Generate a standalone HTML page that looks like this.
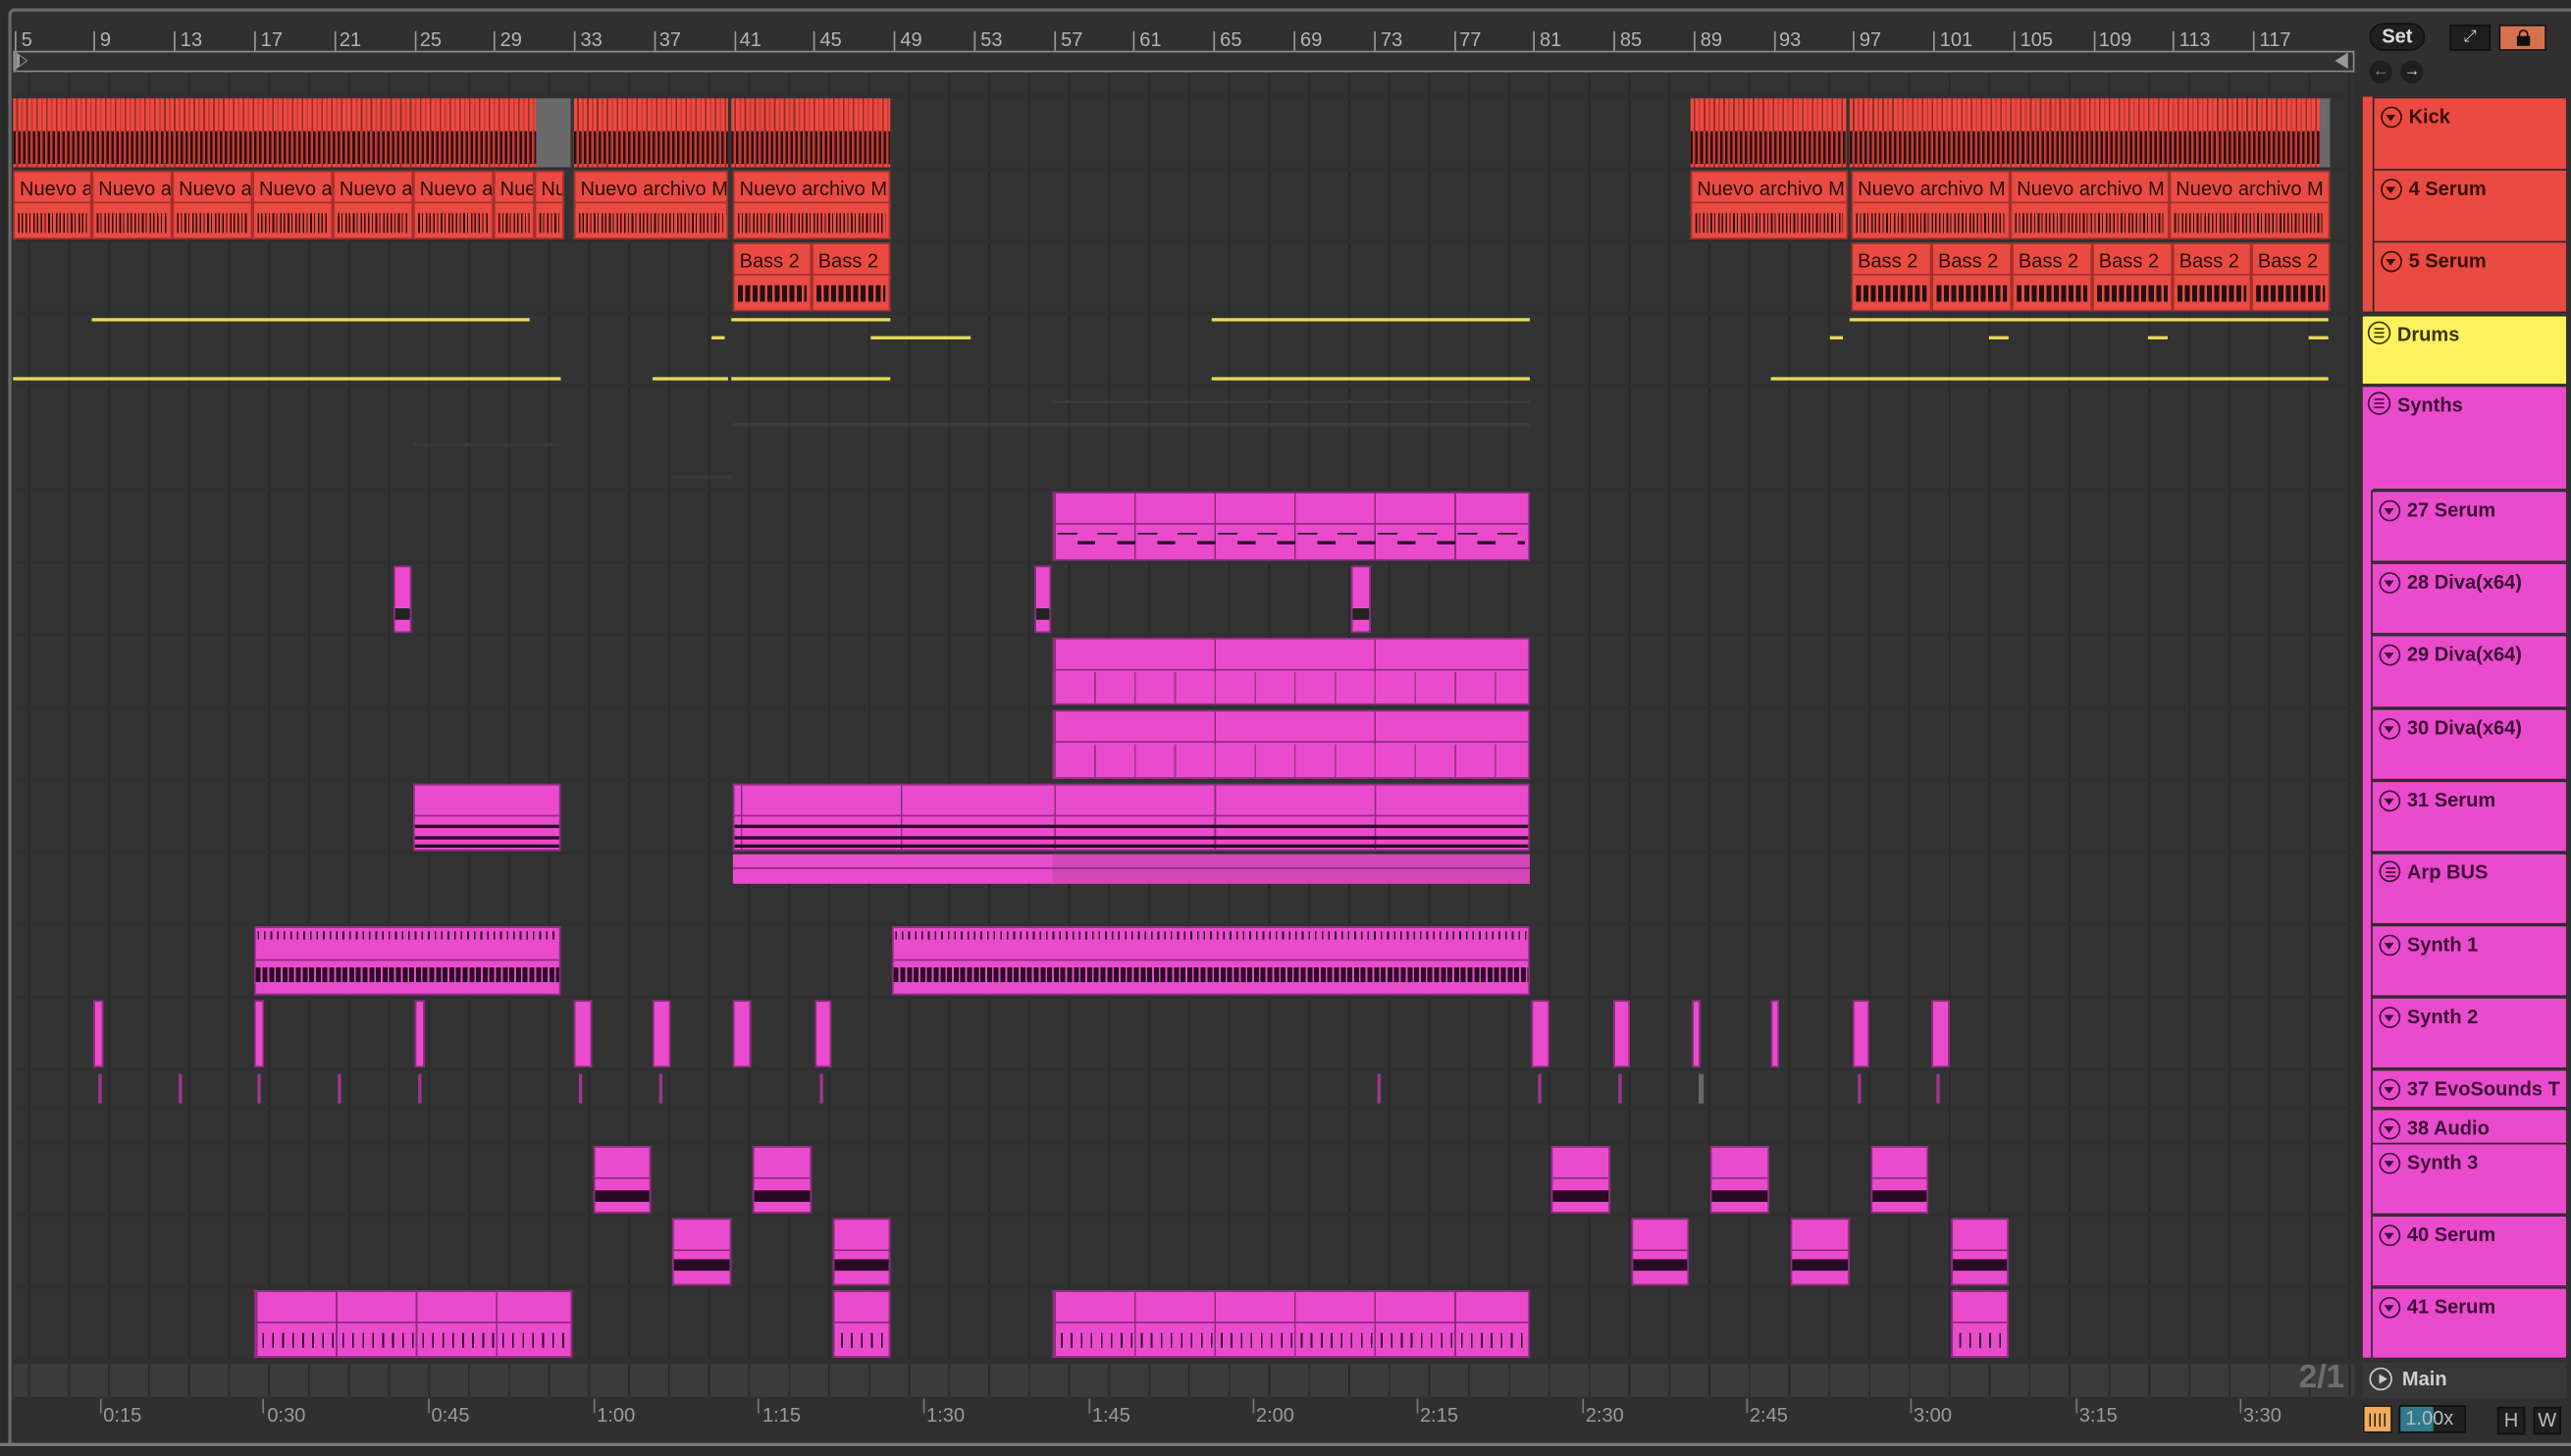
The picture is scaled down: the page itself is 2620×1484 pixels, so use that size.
<!DOCTYPE html>
<html><head><meta charset="utf-8"><style>
*{margin:0;padding:0;box-sizing:border-box}
html,body{width:2620px;height:1484px;overflow:hidden;background:#2a2a2a}
#s{position:absolute;left:0;top:0;width:1568px;height:888px;transform-origin:0 0;transform:scale(1.67092,1.67117);font-family:"Liberation Sans",sans-serif;background:#2a2a2a}
.a{position:absolute}
.frame{left:5px;top:5px;width:1563px;height:877px;border-top:2px solid #6a6a6a;border-left:2px solid #6a6a6a;border-radius:4px 0 0 0;background:#303030}
.lane{position:absolute;left:8px;width:1428px;background-color:#333;background-image:repeating-linear-gradient(90deg,#292929 0 1px,transparent 1px 24.4px);background-position:9.2px 0}
.lbl{color:#b4b4b4;font-size:12px;position:absolute;top:17px}
.tk{position:absolute;top:29px;width:1px;height:5px;background:#999}
.c{position:absolute}
.r{background:#e94b42;border:1px solid #a3302b}
.m{background:#ea4bcd;border:1px solid #8c2c7f}
.rh{height:19px;border-bottom:1px solid #a3302b;font-size:12px;color:#2a0b08;padding:3px 0 0 3px;white-space:nowrap;overflow:hidden}
.rm{position:absolute;left:2px;right:2px;top:25px;height:12px;background:repeating-linear-gradient(90deg,#2a1010 0 1px,transparent 1px 2.3px,#2a1010 2.3px 3px,transparent 3px 4.6px)}
.wav{background:repeating-linear-gradient(90deg,#e94b42 0 2px,#9c2a25 2px 3px,#e94b42 3px 5px,#c23a33 5px 6px)}
.wav::after{content:"";position:absolute;left:0;right:0;top:20px;height:20px;background:repeating-linear-gradient(90deg,#2b1010 0 1.5px,#c63a34 1.5px 3px)}
.y{position:absolute;height:2px;background:#e6dc55}
.mh{position:absolute;left:0;right:0;top:0;height:19px;border-bottom:1px solid #8c2c7f}
.hd{position:absolute;left:1441px;width:124px;font-size:12px;font-weight:bold;padding:4px 0 0 21px}
.ic{position:absolute;left:4px;top:5px;width:13px;height:13px;border:1.3px solid currentColor;border-radius:50%}
.ic::after{content:"";position:absolute;left:2.2px;top:3.5px;border-left:3.3px solid transparent;border-right:3.3px solid transparent;border-top:4px solid currentColor}
.ig{position:absolute;left:3px;top:3px;width:14px;height:14px;border:1.3px solid currentColor;border-radius:50%}
.ig::after{content:"";position:absolute;left:3px;top:3px;width:6px;height:1.3px;background:currentColor;box-shadow:0 2.5px 0 currentColor,0 5px 0 currentColor}
.hr{background:#e94b42;color:#3a0d0a}
.hm{background:#ea4bcd;color:#3d0a35}
.inner{border:1px solid #2a2a2a}
.tl{position:absolute;top:856px;font-size:12px;color:#9a9a9a}
.tt{position:absolute;top:853px;width:1px;height:4px;background:#777}
</style></head><body><div id="s">
<div class="a frame"></div>
<div class="a" style="left:8px;top:31px;width:1428px;height:13px;border:1px solid #8a8a8a;border-left:2px solid #8a8a8a"></div>
<div class="a" style="left:10px;top:32px;width:0;height:0;border-top:5px solid transparent;border-bottom:5px solid transparent;border-left:7px solid #999"></div>
<div class="a" style="left:12px;top:34px;width:0;height:0;border-top:3px solid transparent;border-bottom:3px solid transparent;border-left:4px solid #303030"></div>
<div class="a" style="left:1424px;top:32px;width:0;height:0;border-top:5px solid transparent;border-bottom:5px solid transparent;border-right:8px solid #999"></div>
<div class="tk" style="left:9px;top:19px;height:12px"></div><div class="lbl" style="left:13px">5</div>
<div class="tk" style="left:57px;top:19px;height:12px"></div><div class="lbl" style="left:61px">9</div>
<div class="tk" style="left:106px;top:19px;height:12px"></div><div class="lbl" style="left:110px">13</div>
<div class="tk" style="left:155px;top:19px;height:12px"></div><div class="lbl" style="left:159px">17</div>
<div class="tk" style="left:204px;top:19px;height:12px"></div><div class="lbl" style="left:207px">21</div>
<div class="tk" style="left:253px;top:19px;height:12px"></div><div class="lbl" style="left:256px">25</div>
<div class="tk" style="left:301px;top:19px;height:12px"></div><div class="lbl" style="left:305px">29</div>
<div class="tk" style="left:350px;top:19px;height:12px"></div><div class="lbl" style="left:354px">33</div>
<div class="tk" style="left:399px;top:19px;height:12px"></div><div class="lbl" style="left:402px">37</div>
<div class="tk" style="left:448px;top:19px;height:12px"></div><div class="lbl" style="left:451px">41</div>
<div class="tk" style="left:496px;top:19px;height:12px"></div><div class="lbl" style="left:500px">45</div>
<div class="tk" style="left:545px;top:19px;height:12px"></div><div class="lbl" style="left:549px">49</div>
<div class="tk" style="left:594px;top:19px;height:12px"></div><div class="lbl" style="left:598px">53</div>
<div class="tk" style="left:643px;top:19px;height:12px"></div><div class="lbl" style="left:647px">57</div>
<div class="tk" style="left:691px;top:19px;height:12px"></div><div class="lbl" style="left:695px">61</div>
<div class="tk" style="left:740px;top:19px;height:12px"></div><div class="lbl" style="left:744px">65</div>
<div class="tk" style="left:789px;top:19px;height:12px"></div><div class="lbl" style="left:793px">69</div>
<div class="tk" style="left:838px;top:19px;height:12px"></div><div class="lbl" style="left:842px">73</div>
<div class="tk" style="left:887px;top:19px;height:12px"></div><div class="lbl" style="left:890px">77</div>
<div class="tk" style="left:935px;top:19px;height:12px"></div><div class="lbl" style="left:939px">81</div>
<div class="tk" style="left:984px;top:19px;height:12px"></div><div class="lbl" style="left:988px">85</div>
<div class="tk" style="left:1033px;top:19px;height:12px"></div><div class="lbl" style="left:1037px">89</div>
<div class="tk" style="left:1082px;top:19px;height:12px"></div><div class="lbl" style="left:1085px">93</div>
<div class="tk" style="left:1130px;top:19px;height:12px"></div><div class="lbl" style="left:1134px">97</div>
<div class="tk" style="left:1179px;top:19px;height:12px"></div><div class="lbl" style="left:1183px">101</div>
<div class="tk" style="left:1228px;top:19px;height:12px"></div><div class="lbl" style="left:1232px">105</div>
<div class="tk" style="left:1277px;top:19px;height:12px"></div><div class="lbl" style="left:1280px">109</div>
<div class="tk" style="left:1325px;top:19px;height:12px"></div><div class="lbl" style="left:1329px">113</div>
<div class="tk" style="left:1374px;top:19px;height:12px"></div><div class="lbl" style="left:1378px">117</div>
<div class="lane" style="top:45px;height:13px"></div>
<div class="lane" style="top:60px;height:42px"></div>
<div class="lane" style="top:104px;height:42px"></div>
<div class="lane" style="top:148px;height:42px"></div>
<div class="lane" style="top:192px;height:42px"></div>
<div class="lane" style="top:236px;height:62px"></div>
<div class="lane" style="top:300px;height:42px"></div>
<div class="lane" style="top:344px;height:42px"></div>
<div class="lane" style="top:388px;height:42px"></div>
<div class="lane" style="top:433px;height:42px"></div>
<div class="lane" style="top:477px;height:42px"></div>
<div class="lane" style="top:521px;height:42px"></div>
<div class="lane" style="top:565px;height:42px"></div>
<div class="lane" style="top:609px;height:42px"></div>
<div class="lane" style="top:653px;height:22px"></div>
<div class="lane" style="top:677px;height:20px"></div>
<div class="lane" style="top:698px;height:42px"></div>
<div class="lane" style="top:742px;height:42px"></div>
<div class="lane" style="top:786px;height:42px"></div>
<div class="lane" style="top:832px;height:20px;background-color:#3b3b3b"></div>
<div class="c wav" style="left:8px;top:60px;width:319px;height:42px"></div>
<div class="c" style="left:327px;top:60px;width:21px;height:42px;background:#6a6a6a"></div>
<div class="c wav" style="left:350px;top:60px;width:94px;height:42px"></div>
<div class="c wav" style="left:446px;top:60px;width:97px;height:42px"></div>
<div class="c wav" style="left:1031px;top:60px;width:95px;height:42px"></div>
<div class="c wav" style="left:1128px;top:60px;width:287px;height:42px"></div>
<div class="c" style="left:1415px;top:60px;width:6px;height:42px;background:#6a6a6a"></div>
<div class="c r" style="left:8px;top:104px;width:48px;height:42px"><div class="rh">Nuevo a</div><div class="rm"></div></div>
<div class="c r" style="left:56px;top:104px;width:49px;height:42px"><div class="rh">Nuevo a</div><div class="rm"></div></div>
<div class="c r" style="left:105px;top:104px;width:49px;height:42px"><div class="rh">Nuevo a</div><div class="rm"></div></div>
<div class="c r" style="left:154px;top:104px;width:49px;height:42px"><div class="rh">Nuevo a</div><div class="rm"></div></div>
<div class="c r" style="left:203px;top:104px;width:49px;height:42px"><div class="rh">Nuevo a</div><div class="rm"></div></div>
<div class="c r" style="left:252px;top:104px;width:49px;height:42px"><div class="rh">Nuevo a</div><div class="rm"></div></div>
<div class="c r" style="left:301px;top:104px;width:25px;height:42px"><div class="rh">Nue</div><div class="rm"></div></div>
<div class="c r" style="left:326px;top:104px;width:18px;height:42px"><div class="rh">Nu</div><div class="rm"></div></div>
<div class="c r" style="left:350px;top:104px;width:94px;height:42px"><div class="rh">Nuevo archivo M</div><div class="rm"></div></div>
<div class="c r" style="left:447px;top:104px;width:96px;height:42px"><div class="rh">Nuevo archivo M</div><div class="rm"></div></div>
<div class="c r" style="left:1031px;top:104px;width:96px;height:42px"><div class="rh">Nuevo archivo M</div><div class="rm"></div></div>
<div class="c r" style="left:1129px;top:104px;width:97px;height:42px"><div class="rh">Nuevo archivo M</div><div class="rm"></div></div>
<div class="c r" style="left:1226px;top:104px;width:97px;height:42px"><div class="rh">Nuevo archivo M</div><div class="rm"></div></div>
<div class="c r" style="left:1323px;top:104px;width:98px;height:42px"><div class="rh">Nuevo archivo M</div><div class="rm"></div></div>
<div class="c r" style="left:447px;top:148px;width:48px;height:42px"><div class="rh">Bass 2</div><div class="rm" style="background:repeating-linear-gradient(90deg,#221010 0 3px,transparent 3px 4.5px);top:25px;height:10px"></div></div>
<div class="c r" style="left:495px;top:148px;width:48px;height:42px"><div class="rh">Bass 2</div><div class="rm" style="background:repeating-linear-gradient(90deg,#221010 0 3px,transparent 3px 4.5px);top:25px;height:10px"></div></div>
<div class="c r" style="left:1129px;top:148px;width:49px;height:42px"><div class="rh">Bass 2</div><div class="rm" style="background:repeating-linear-gradient(90deg,#221010 0 3px,transparent 3px 4.5px);top:25px;height:10px"></div></div>
<div class="c r" style="left:1178px;top:148px;width:49px;height:42px"><div class="rh">Bass 2</div><div class="rm" style="background:repeating-linear-gradient(90deg,#221010 0 3px,transparent 3px 4.5px);top:25px;height:10px"></div></div>
<div class="c r" style="left:1227px;top:148px;width:49px;height:42px"><div class="rh">Bass 2</div><div class="rm" style="background:repeating-linear-gradient(90deg,#221010 0 3px,transparent 3px 4.5px);top:25px;height:10px"></div></div>
<div class="c r" style="left:1276px;top:148px;width:49px;height:42px"><div class="rh">Bass 2</div><div class="rm" style="background:repeating-linear-gradient(90deg,#221010 0 3px,transparent 3px 4.5px);top:25px;height:10px"></div></div>
<div class="c r" style="left:1325px;top:148px;width:48px;height:42px"><div class="rh">Bass 2</div><div class="rm" style="background:repeating-linear-gradient(90deg,#221010 0 3px,transparent 3px 4.5px);top:25px;height:10px"></div></div>
<div class="c r" style="left:1373px;top:148px;width:48px;height:42px"><div class="rh">Bass 2</div><div class="rm" style="background:repeating-linear-gradient(90deg,#221010 0 3px,transparent 3px 4.5px);top:25px;height:10px"></div></div>
<div class="y" style="left:56px;top:194px;width:267px"></div>
<div class="y" style="left:8px;top:230px;width:334px"></div>
<div class="y" style="left:398px;top:230px;width:46px"></div>
<div class="y" style="left:434px;top:205px;width:8px"></div>
<div class="y" style="left:446px;top:194px;width:97px"></div>
<div class="y" style="left:446px;top:230px;width:97px"></div>
<div class="y" style="left:531px;top:205px;width:61px"></div>
<div class="y" style="left:739px;top:194px;width:194px"></div>
<div class="y" style="left:739px;top:230px;width:194px"></div>
<div class="y" style="left:1128px;top:194px;width:292px"></div>
<div class="y" style="left:1080px;top:230px;width:340px"></div>
<div class="y" style="left:1116px;top:205px;width:8px"></div>
<div class="y" style="left:1213px;top:205px;width:12px"></div>
<div class="y" style="left:1310px;top:205px;width:12px"></div>
<div class="y" style="left:1408px;top:205px;width:12px"></div>
<div class="c" style="left:447px;top:258px;width:486px;height:2px;background:#3c3c3c"></div>
<div class="c" style="left:642px;top:244px;width:291px;height:2px;background:#3a3a3a"></div>
<div class="c" style="left:252px;top:270px;width:90px;height:2px;background:#3a3a3a"></div>
<div class="c" style="left:410px;top:290px;width:36px;height:2px;background:#3a3a3a"></div>
<div class="c m" style="left:642px;top:300px;width:291px;height:42px;background-image:repeating-linear-gradient(90deg,#8c2c7f 0 1px,transparent 1px 48.8px)"><div class="mh"></div><div class="a" style="left:2px;right:2px;top:24px;height:1px;background:repeating-linear-gradient(90deg,#2a0a25 0 12px,transparent 12px 24.4px)"></div><div class="a" style="left:14px;right:2px;top:29px;height:2px;background:repeating-linear-gradient(90deg,#2a0a25 0 11px,transparent 11px 24.4px)"></div></div>
<div class="c m" style="left:240px;top:345px;width:11px;height:41px"><div class="a" style="left:0;right:0;top:25px;height:7px;background:#222"></div></div>
<div class="c m" style="left:631px;top:345px;width:10px;height:41px"><div class="a" style="left:0;right:0;top:25px;height:7px;background:#222"></div></div>
<div class="c m" style="left:824px;top:345px;width:12px;height:41px"><div class="a" style="left:0;right:0;top:25px;height:7px;background:#222"></div></div>
<div class="c m" style="left:642px;top:389px;width:291px;height:41px;background-image:repeating-linear-gradient(90deg,#8c2c7f 0 1px,transparent 1px 97.6px)"><div class="mh"></div><div class="a" style="left:0;right:0;top:20px;bottom:0;background:repeating-linear-gradient(90deg,#a0358f 0 1px,transparent 1px 24.4px)"></div></div>
<div class="c m" style="left:642px;top:433px;width:291px;height:42px;background-image:repeating-linear-gradient(90deg,#8c2c7f 0 1px,transparent 1px 97.6px)"><div class="mh"></div><div class="a" style="left:0;right:0;top:20px;bottom:0;background:repeating-linear-gradient(90deg,#a0358f 0 1px,transparent 1px 24.4px)"></div></div>
<div class="c m" style="left:252px;top:478px;width:90px;height:41px"><div class="mh"></div><div class="a" style="left:0;right:0;top:24px;height:2px;background:#2a0a25"></div><div class="a" style="left:0;right:0;top:31px;height:2px;background:#2a0a25"></div><div class="a" style="left:0;right:0;top:36px;height:2px;background:#2a0a25"></div></div>
<div class="c m" style="left:447px;top:478px;width:486px;height:41px;background-image:repeating-linear-gradient(90deg,#8c2c7f 0 1px,transparent 1px 97.6px);background-position:195px 0"><div class="mh"></div><div class="a" style="left:0;right:0;top:24px;height:2px;background:#2a0a25"></div><div class="a" style="left:0;right:0;top:31px;height:2px;background:#2a0a25"></div><div class="a" style="left:0;right:0;top:36px;height:2px;background:#2a0a25"></div></div>
<div class="c" style="left:447px;top:521px;width:486px;height:18px;background:#ea4bcd"></div>
<div class="c" style="left:642px;top:521px;width:291px;height:18px;background:#d246b8"></div>
<div class="c" style="left:447px;top:529px;width:486px;height:1px;background:#8c2c7f"></div>
<div class="c m" style="left:155px;top:565px;width:187px;height:42px;background-image:repeating-linear-gradient(90deg,#ea4bcd 0 1px,#2a0a25 1px 2px,#ea4bcd 2px 4px);background-size:100% 5px;background-repeat:no-repeat;background-position:0 2px"><div class="a" style="left:0;right:0;top:19px;height:1px;background:#8c2c7f"></div><div class="a" style="left:0;right:0;top:24px;height:9px;background:repeating-linear-gradient(90deg,#2a0a25 0 3px,transparent 3px 4.07px)"></div></div>
<div class="c m" style="left:544px;top:565px;width:389px;height:42px;background-image:repeating-linear-gradient(90deg,#ea4bcd 0 1px,#2a0a25 1px 2px,#ea4bcd 2px 4px);background-size:100% 5px;background-repeat:no-repeat;background-position:0 2px"><div class="a" style="left:0;right:0;top:19px;height:1px;background:#8c2c7f"></div><div class="a" style="left:0;right:0;top:24px;height:9px;background:repeating-linear-gradient(90deg,#2a0a25 0 3px,transparent 3px 4.07px)"></div></div>
<div class="c m" style="left:57px;top:610px;width:6px;height:41px"></div>
<div class="c m" style="left:155px;top:610px;width:6px;height:41px"></div>
<div class="c m" style="left:253px;top:610px;width:6px;height:41px"></div>
<div class="c m" style="left:350px;top:610px;width:11px;height:41px"></div>
<div class="c m" style="left:398px;top:610px;width:11px;height:41px"></div>
<div class="c m" style="left:447px;top:610px;width:11px;height:41px"></div>
<div class="c m" style="left:497px;top:610px;width:10px;height:41px"></div>
<div class="c m" style="left:934px;top:610px;width:11px;height:41px"></div>
<div class="c m" style="left:984px;top:610px;width:10px;height:41px"></div>
<div class="c m" style="left:1032px;top:610px;width:5px;height:41px"></div>
<div class="c m" style="left:1080px;top:610px;width:5px;height:41px"></div>
<div class="c m" style="left:1130px;top:610px;width:10px;height:41px"></div>
<div class="c m" style="left:1178px;top:610px;width:11px;height:41px"></div>
<div class="c" style="left:60px;top:655px;width:2px;height:18px;background:#a0358f"></div>
<div class="c" style="left:109px;top:655px;width:2px;height:18px;background:#a0358f"></div>
<div class="c" style="left:157px;top:655px;width:2px;height:18px;background:#a0358f"></div>
<div class="c" style="left:206px;top:655px;width:2px;height:18px;background:#a0358f"></div>
<div class="c" style="left:255px;top:655px;width:2px;height:18px;background:#a0358f"></div>
<div class="c" style="left:353px;top:655px;width:2px;height:18px;background:#a0358f"></div>
<div class="c" style="left:402px;top:655px;width:2px;height:18px;background:#a0358f"></div>
<div class="c" style="left:500px;top:655px;width:2px;height:18px;background:#a0358f"></div>
<div class="c" style="left:840px;top:655px;width:2px;height:18px;background:#a0358f"></div>
<div class="c" style="left:938px;top:655px;width:2px;height:18px;background:#a0358f"></div>
<div class="c" style="left:987px;top:655px;width:2px;height:18px;background:#a0358f"></div>
<div class="c" style="left:1036px;top:655px;width:3px;height:18px;background:#6a6a6a"></div>
<div class="c" style="left:1133px;top:655px;width:2px;height:18px;background:#a0358f"></div>
<div class="c" style="left:1181px;top:655px;width:2px;height:18px;background:#a0358f"></div>
<div class="c m" style="left:362px;top:699px;width:35px;height:41px"><div class="mh"></div><div class="a" style="left:0;right:0;top:26px;height:7px;background:#2a0a25"></div></div>
<div class="c m" style="left:459px;top:699px;width:36px;height:41px"><div class="mh"></div><div class="a" style="left:0;right:0;top:26px;height:7px;background:#2a0a25"></div></div>
<div class="c m" style="left:946px;top:699px;width:36px;height:41px"><div class="mh"></div><div class="a" style="left:0;right:0;top:26px;height:7px;background:#2a0a25"></div></div>
<div class="c m" style="left:1043px;top:699px;width:36px;height:41px"><div class="mh"></div><div class="a" style="left:0;right:0;top:26px;height:7px;background:#2a0a25"></div></div>
<div class="c m" style="left:1141px;top:699px;width:35px;height:41px"><div class="mh"></div><div class="a" style="left:0;right:0;top:26px;height:7px;background:#2a0a25"></div></div>
<div class="c m" style="left:410px;top:743px;width:36px;height:41px"><div class="mh"></div><div class="a" style="left:0;right:0;top:24px;height:7px;background:#2a0a25"></div></div>
<div class="c m" style="left:508px;top:743px;width:35px;height:41px"><div class="mh"></div><div class="a" style="left:0;right:0;top:24px;height:7px;background:#2a0a25"></div></div>
<div class="c m" style="left:995px;top:743px;width:35px;height:41px"><div class="mh"></div><div class="a" style="left:0;right:0;top:24px;height:7px;background:#2a0a25"></div></div>
<div class="c m" style="left:1092px;top:743px;width:36px;height:41px"><div class="mh"></div><div class="a" style="left:0;right:0;top:24px;height:7px;background:#2a0a25"></div></div>
<div class="c m" style="left:1190px;top:743px;width:35px;height:41px"><div class="mh"></div><div class="a" style="left:0;right:0;top:24px;height:7px;background:#2a0a25"></div></div>
<div class="c m" style="left:155px;top:787px;width:194px;height:41px;background-image:repeating-linear-gradient(90deg,#8c2c7f 0 1px,transparent 1px 48.8px)"><div class="mh"></div><div class="a" style="left:4px;right:2px;top:25px;height:9px;background:repeating-linear-gradient(90deg,#2a0a25 0 1px,transparent 1px 6px,#2a0a25 6px 7px,transparent 7px 12.2px)"></div></div>
<div class="c m" style="left:508px;top:787px;width:35px;height:41px"><div class="mh"></div><div class="a" style="left:4px;right:2px;top:25px;height:9px;background:repeating-linear-gradient(90deg,#2a0a25 0 1px,transparent 1px 6px,#2a0a25 6px 7px,transparent 7px 12.2px)"></div></div>
<div class="c m" style="left:642px;top:787px;width:291px;height:41px;background-image:repeating-linear-gradient(90deg,#8c2c7f 0 1px,transparent 1px 48.8px)"><div class="mh"></div><div class="a" style="left:4px;right:2px;top:25px;height:9px;background:repeating-linear-gradient(90deg,#2a0a25 0 1px,transparent 1px 6px,#2a0a25 6px 7px,transparent 7px 12.2px)"></div></div>
<div class="c m" style="left:1190px;top:787px;width:35px;height:41px"><div class="mh"></div><div class="a" style="left:4px;right:2px;top:25px;height:9px;background:repeating-linear-gradient(90deg,#2a0a25 0 1px,transparent 1px 6px,#2a0a25 6px 7px,transparent 7px 12.2px)"></div></div>
<div class="a" style="left:1402px;top:829px;font-size:20px;font-weight:bold;color:#6e6e6e">2/1</div>
<div class="a" style="left:1438px;top:8px;width:130px;height:50px;background:#303030"></div>
<div class="a" style="left:1445px;top:14px;width:34px;height:17px;border-radius:9px;background:#1f1f1f;border:1px solid #111;color:#ddd;font-size:12px;font-weight:bold;text-align:center;line-height:15px">Set</div>
<div class="a" style="left:1494px;top:15px;width:25px;height:16px;background:#1e1e1e;border:1px solid #111;color:#ddd;font-size:10px;text-align:center;line-height:14px">⤢</div>
<div class="a" style="left:1524px;top:15px;width:29px;height:16px;background:#d6714f;border:1px solid #111"><div class="a" style="left:10px;top:6px;width:8px;height:6px;background:#111"></div><div class="a" style="left:11px;top:2px;width:6px;height:6px;border:1.5px solid #111;border-bottom:none;border-radius:3px 3px 0 0"></div></div>
<div class="a" style="left:1445px;top:37px;width:14px;height:14px;border-radius:50%;background:#1f1f1f;color:#888;font-size:10px;text-align:center;line-height:14px">←</div>
<div class="a" style="left:1464px;top:37px;width:14px;height:14px;border-radius:50%;background:#1f1f1f;color:#ddd;font-size:10px;text-align:center;line-height:14px">→</div>
<div class="a" style="left:1441px;top:59px;width:6px;height:131px;background:#e94b42"></div>
<div class="hd hr inner" style="left:1447px;width:119px;top:59px;height:45px"><span class="ic"></span>Kick</div>
<div class="hd hr inner" style="left:1447px;width:119px;top:103px;height:45px"><span class="ic"></span>4 Serum</div>
<div class="hd hr inner" style="left:1447px;width:119px;top:147px;height:44px"><span class="ic"></span>5 Serum</div>
<div class="hd" style="top:193px;height:41px;background:#fcf25e;color:#3a3510;padding-left:21px"><span class="ig"></span>Drums</div>
<div class="hd hm" style="top:236px;height:62px;padding-left:21px"><span class="ig"></span>Synths</div>
<div class="a" style="left:1441px;top:298px;width:6px;height:530px;background:#ea4bcd"></div>
<div class="hd hm inner" style="left:1446px;width:120px;top:299px;height:44px"><span class="ic"></span>27 Serum</div>
<div class="hd hm inner" style="left:1446px;width:120px;top:343px;height:44px"><span class="ic"></span>28 Diva(x64)</div>
<div class="hd hm inner" style="left:1446px;width:120px;top:387px;height:45px"><span class="ic"></span>29 Diva(x64)</div>
<div class="hd hm inner" style="left:1446px;width:120px;top:432px;height:44px"><span class="ic"></span>30 Diva(x64)</div>
<div class="hd hm inner" style="left:1446px;width:120px;top:476px;height:44px"><span class="ic"></span>31 Serum</div>
<div class="hd hm inner" style="left:1446px;width:120px;top:520px;height:44px"><span class="ig" style="left:4px;top:4px;width:13px;height:13px"></span>Arp BUS</div>
<div class="hd hm inner" style="left:1446px;width:120px;top:564px;height:44px"><span class="ic"></span>Synth 1</div>
<div class="hd hm inner" style="left:1446px;width:120px;top:608px;height:44px"><span class="ic"></span>Synth 2</div>
<div class="hd hm inner" style="left:1446px;width:120px;top:652px;height:24px;white-space:nowrap;overflow:hidden"><span class="ic"></span>37 EvoSounds T</div>
<div class="hd hm inner" style="left:1446px;width:120px;top:676px;height:22px"><span class="ic"></span>38 Audio</div>
<div class="hd hm inner" style="left:1446px;width:120px;top:697px;height:44px"><span class="ic"></span>Synth 3</div>
<div class="hd hm inner" style="left:1446px;width:120px;top:741px;height:44px"><span class="ic"></span>40 Serum</div>
<div class="hd hm inner" style="left:1446px;width:120px;top:785px;height:44px"><span class="ic"></span>41 Serum</div>
<div class="hd" style="top:831px;height:22px;background:#383838;color:#cfcfcf;padding-left:24px;padding-top:3px">Main<span class="a" style="left:4px;top:3px;width:14px;height:14px;border:1.3px solid #cfcfcf;border-radius:50%"></span><span class="a" style="left:10px;top:7px;border-top:3.5px solid transparent;border-bottom:3.5px solid transparent;border-left:5px solid #cfcfcf"></span></div>
<div class="a" style="left:8px;top:853px;width:1428px;height:24px;background:#303030"></div>
<div class="tt" style="left:61px;height:9px"></div><div class="tl" style="left:63px">0:15</div>
<div class="tt" style="left:160px;height:9px"></div><div class="tl" style="left:163px">0:30</div>
<div class="tt" style="left:261px;height:9px"></div><div class="tl" style="left:263px">0:45</div>
<div class="tt" style="left:362px;height:9px"></div><div class="tl" style="left:364px">1:00</div>
<div class="tt" style="left:462px;height:9px"></div><div class="tl" style="left:465px">1:15</div>
<div class="tt" style="left:563px;height:9px"></div><div class="tl" style="left:565px">1:30</div>
<div class="tt" style="left:664px;height:9px"></div><div class="tl" style="left:666px">1:45</div>
<div class="tt" style="left:764px;height:9px"></div><div class="tl" style="left:766px">2:00</div>
<div class="tt" style="left:864px;height:9px"></div><div class="tl" style="left:866px">2:15</div>
<div class="tt" style="left:965px;height:9px"></div><div class="tl" style="left:967px">2:30</div>
<div class="tt" style="left:1065px;height:9px"></div><div class="tl" style="left:1067px">2:45</div>
<div class="tt" style="left:1165px;height:9px"></div><div class="tl" style="left:1167px">3:00</div>
<div class="tt" style="left:1266px;height:9px"></div><div class="tl" style="left:1268px">3:15</div>
<div class="tt" style="left:1366px;height:9px"></div><div class="tl" style="left:1368px">3:30</div>
<div class="a" style="left:1441px;top:857px;width:18px;height:17px;background:#f0ac5c;border:1px solid #111"><div class="a" style="left:3px;top:4px;width:10px;height:8px;background:repeating-linear-gradient(90deg,#222 0 1px,transparent 1px 3px)"></div></div>
<div class="a" style="left:1463px;top:857px;width:41px;height:17px;background:#1f1f1f;border:1px solid #111;color:#bbb;font-size:12px;line-height:15px;padding-left:3px"><span class="a" style="left:0;top:0;width:20px;height:15px;background:#2f7a8c"></span><span style="position:relative">1.00x</span></div>
<div class="a" style="left:1523px;top:858px;width:17px;height:17px;background:#1f1f1f;border:1px solid #111;color:#bbb;font-size:12px;text-align:center;line-height:15px">H</div>
<div class="a" style="left:1545px;top:858px;width:17px;height:17px;background:#1f1f1f;border:1px solid #111;color:#bbb;font-size:12px;text-align:center;line-height:15px">W</div>
<div class="a" style="left:0;top:880px;width:1568px;height:2px;background:#777"></div>
</div></body></html>
